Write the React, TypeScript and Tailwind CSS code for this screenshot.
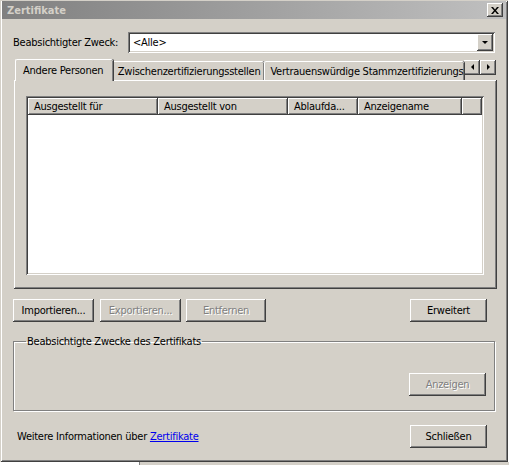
import React from "react";

// classic 3D bevels
const raised =
  "shadow-[inset_-1px_-1px_#404040,inset_1px_1px_#ffffff,inset_-2px_-2px_#808080,inset_2px_2px_#d4d0c8]";
const sunken =
  "shadow-[inset_1px_1px_#808080,inset_-1px_-1px_#ffffff,inset_2px_2px_#404040,inset_-2px_-2px_#d4d0c8]";

const Btn = ({ label, w, disabled }: { label: string; w: string; disabled?: boolean }) => (
  <div
    className={`h-[23px] ${w} flex items-center justify-center bg-[#d4d0c8] ${raised} ${
      disabled ? "text-[#808080] [text-shadow:1px_1px_#ffffff]" : "text-black"
    }`}
  >
    {label}
  </div>
);

const Arrow = ({ dir }: { dir: "left" | "right" | "down" }) => {
  const pts = dir === "left" ? "4,0 4,6 1,3" : dir === "right" ? "1,0 1,6 4,3" : "0,1 6,1 3,4";
  const box = dir === "down" ? "0 0 7 5" : "0 0 5 7";
  return (
    <svg viewBox={box} width={dir === "down" ? 7 : 5} height={dir === "down" ? 5 : 7}>
      <polygon points={pts} fill="#000" />
    </svg>
  );
};

const Tab = ({ label, active, w }: { label: string; active?: boolean; w: string }) => (
  <div
    className={`${w} ${
      active ? "h-[22px] -mb-[1px] z-10 -mr-[1px] pl-[7px]" : "h-[19px] pl-[5px]"
    } relative bg-[#d4d0c8] border-t border-l border-white rounded-tl-[2px] rounded-tr-[2px] shadow-[inset_-1px_0_#808080,1px_0_#404040] flex items-center overflow-hidden whitespace-nowrap`}
  >
    {label}
  </div>
);

const columns = [
  { label: "Ausgestellt für", w: "w-[130px]" },
  { label: "Ausgestellt von", w: "w-[130px]" },
  { label: "Ablaufda...", w: "w-[70px]" },
  { label: "Anzeigename", w: "w-[104px]" },
];

export default function App() {
  return (
    <div className="w-[509px] h-[465px] bg-white overflow-hidden font-['DejaVu_Sans_Condensed','Liberation_Sans',sans-serif] text-[11px] tracking-[-0.25px] leading-none text-black">
      <div className="w-[508px] h-[462px] bg-[#d4d0c8] flex flex-col shadow-[inset_1px_1px_#d4d0c8,inset_-1px_-1px_#404040,inset_2px_2px_#ffffff,inset_-2px_-2px_#808080]">
        {/* title bar */}
        <div className="mx-[2px] mt-[1px] h-[18px] bg-gradient-to-r from-[#808080] to-[#c0c0c0] flex items-center justify-between pl-[5px] pr-[3px]">
          <span className="font-bold text-[#d4d0c8] text-[11px] tracking-normal">Zertifikate</span>
          <div className={`w-[16px] h-[14px] bg-[#d4d0c8] ${raised} flex items-center justify-center`}>
            <svg viewBox="0 0 8 7" width="8" height="7">
              <path d="M0 0h2l2 2.5L6 0h2L5 3.5 8 7H6L4 4.5 2 7H0l3-3.5z" fill="#000" />
            </svg>
          </div>
        </div>

        <div className="flex flex-col px-[13px]">
          {/* purpose selector */}
          <div className="mt-[13px] flex items-center h-[21px]">
            <span className="w-[115px]">Beabsichtigter Zweck:</span>
            <div className={`flex-1 h-[21px] bg-white ${sunken} flex items-center p-[2px]`}>
              <span className="flex-1 pl-[3px]">&lt;Alle&gt;</span>
              <div className={`w-[16px] h-[17px] bg-[#d4d0c8] ${raised} flex items-center justify-center`}>
                <Arrow dir="down" />
              </div>
            </div>
          </div>

          {/* tabs */}
          <div className="mt-[6px] ml-[1px] w-[483px] flex flex-col">
            <div className="h-[21px] flex items-end pl-[1px] relative">
              <Tab label="Andere Personen" active w="w-[98px]" />
              <Tab label="Zwischenzertifizierungsstellen" w="w-[153px]" />
              <Tab label="Vertrauenswürdige Stammzertifizierungsstellen" w="w-[200px]" />
              <div className="ml-auto mr-[1px] mb-[5px] flex">
                <div className={`w-[16px] h-[15px] ${raised} flex items-center justify-center`}>
                  <Arrow dir="left" />
                </div>
                <div className={`w-[16px] h-[15px] ${raised} flex items-center justify-center`}>
                  <Arrow dir="right" />
                </div>
              </div>
            </div>
            <div className={`h-[209px] bg-[#d4d0c8] ${raised} pt-[16px] pl-[12px] pr-[13px] pb-[14px]`}>
              <div className={`h-full bg-white ${sunken} p-[2px] flex flex-col`}>
                <div className="h-[17px] flex">
                  {columns.map((c) => (
                    <div key={c.label} className={`${c.w} ${raised} bg-[#d4d0c8] flex items-center pl-[6px] whitespace-nowrap`}>
                      {c.label}
                    </div>
                  ))}
                  <div className={`flex-1 ${raised} bg-[#d4d0c8]`} />
                </div>
              </div>
            </div>
          </div>

          {/* actions */}
          <div className="mt-[10px] flex items-center">
            <Btn label="Importieren..." w="w-[81px]" />
            <div className="ml-[6px]">
              <Btn label="Exportieren..." w="w-[81px]" disabled />
            </div>
            <div className="ml-[5px]">
              <Btn label="Entfernen" w="w-[80px]" disabled />
            </div>
            <div className="ml-auto mr-[8px]">
              <Btn label="Erweitert" w="w-[77px]" />
            </div>
          </div>

          {/* purposes group */}
          <fieldset className="mt-[14px] h-[75px] border border-[#808080] shadow-[1px_1px_#ffffff,inset_1px_1px_#ffffff] px-[8px]">
            <legend className="ml-[4px] px-[1px]">Beabsichtigte Zwecke des Zertifikats</legend>
            <div className="mt-[26px] flex justify-end">
              <Btn label="Anzeigen" w="w-[77px]" disabled />
            </div>
          </fieldset>

          {/* footer */}
          <div className="mt-[14px] flex items-center">
            <span className="pl-[4px]">
              Weitere Informationen über{" "}
              <span className="text-[#0000ee] underline">Zertifikate</span>
            </span>
            <div className="ml-auto mr-[8px]">
              <Btn label="Schließen" w="w-[77px]" />
            </div>
          </div>
        </div>
      </div>
      {/* whatever sits behind the dialog */}
      <div className="flex h-[3px]">
        <div className="w-[139px] bg-white" />
        <div className="flex-1 bg-[#d4d0c8] border-l border-[#808080]" />
      </div>
    </div>
  );
}
